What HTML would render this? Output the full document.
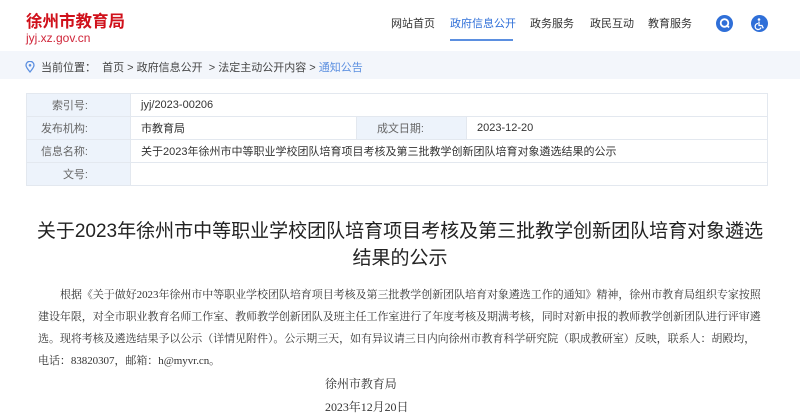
<!DOCTYPE html>
<html><head><meta charset="utf-8"><style>
*{margin:0;padding:0;box-sizing:border-box}
body{width:800px;height:418px;overflow:hidden;background:#fff;font-family:"Liberation Sans","Noto Sans CJK SC",sans-serif;position:relative}
.a{position:absolute;white-space:nowrap}
.logo{left:26px;top:8px;font-size:16.5px;font-weight:bold;color:#d0111b}
.url{left:26px;top:31px;font-size:12px;color:#d0263a}
.nav{top:15px;font-size:11px;color:#333}
.ic{top:14px;width:18px;height:18px;border-radius:50%;background:#2f6fd8}
.crumb{left:0;top:51px;width:800px;height:28px;background:#f3f6fb}
table{position:absolute;left:26px;top:93px;width:742px;border-collapse:collapse;font-size:11px;color:#333}
td{border:1px solid #e3e8ef;height:23px;padding:0 10px}
td.l{background:#edf3fb;text-align:right;color:#666;width:104px;padding-right:42px}
.t{left:0;width:800px;text-align:center;font-size:19px;color:#222}
.p{left:38px;font-family:"Liberation Serif","Noto Serif CJK SC",serif;font-size:11px;color:#333;letter-spacing:-0.05px}
</style></head><body>
<div class="a logo">徐州市教育局</div>
<div class="a url">jyj.xz.gov.cn</div>
<div class="a nav" style="left:391px">网站首页</div>
<div class="a nav" style="left:450px;color:#2f6fd8">政府信息公开</div>
<div class="a" style="left:450px;top:39px;width:63px;height:2px;background:#5b8fe0"></div>
<div class="a nav" style="left:530px">政务服务</div>
<div class="a nav" style="left:590px">政民互动</div>
<div class="a nav" style="left:648px">教育服务</div>
<div class="a ic" style="left:716px;top:15px;width:17px;height:17px"><svg width="17" height="17"><circle cx="8.5" cy="8" r="3.8" fill="none" stroke="#fff" stroke-width="1.8"/><path d="M11 10.5l2 2" stroke="#fff" stroke-width="1.8"/></svg></div>
<div class="a ic" style="left:751px;top:15px;width:17px;height:17px"><svg width="17" height="17"><circle cx="8" cy="4.5" r="1.3" fill="#fff"/><path d="M8 6.5v4h3l1.3 2.8M7 8.5a3 3 0 1 0 3 4" fill="none" stroke="#fff" stroke-width="1.3"/></svg></div>
<div class="a crumb"></div>
<div class="a" style="left:25px;top:60px"><svg width="10" height="12"><path d="M5 11C2 7.5 1 6 1 4.3a4 4 0 0 1 8 0C9 6 8 7.5 5 11z" fill="none" stroke="#5b8fe0" stroke-width="1.3"/><circle cx="5" cy="4.3" r="1.3" fill="#5b8fe0"/></svg></div>
<div class="a" style="left:41px;top:59px;font-size:11px;color:#444">当前位置：&nbsp;&nbsp;首页 &gt; 政府信息公开 &nbsp;&gt; 法定主动公开内容 &gt; <span style="color:#5b8fe0">通知公告</span></div>
<table>
<tr><td class="l">索引号:</td><td colspan="3">jyj/2023-00206</td></tr>
<tr><td class="l">发布机构:</td><td style="width:226px">市教育局</td><td class="l" style="width:110px">成文日期:</td><td>2023-12-20</td></tr>
<tr><td class="l">信息名称:</td><td colspan="3">关于2023年徐州市中等职业学校团队培育项目考核及第三批教学创新团队培育对象遴选结果的公示</td></tr>
<tr><td class="l">文号:</td><td colspan="3"></td></tr>
</table>
<div class="a t" style="top:216px">关于2023年徐州市中等职业学校团队培育项目考核及第三批教学创新团队培育对象遴选</div>
<div class="a t" style="top:243px">结果的公示</div>
<div class="a p" style="top:286px;left:60px">根据《关于做好2023年徐州市中等职业学校团队培育项目考核及第三批教学创新团队培育对象遴选工作的通知》精神，徐州市教育局组织专家按照</div>
<div class="a p" style="top:308px">建设年限，对全市职业教育名师工作室、教师教学创新团队及班主任工作室进行了年度考核及期满考核，同时对新申报的教师教学创新团队进行评审遴</div>
<div class="a p" style="top:330px">选。现将考核及遴选结果予以公示（详情见附件）。公示期三天，如有异议请三日内向徐州市教育科学研究院（职成教研室）反映，联系人：胡殿均，</div>
<div class="a p" style="top:352px">电话：83820307，邮箱：h@myvr.cn。</div>
<div class="a p" style="top:375px;left:325px;font-size:12px">徐州市教育局</div>
<div class="a p" style="top:398px;left:325px;font-size:12px">2023年12月20日</div>
</body></html>
